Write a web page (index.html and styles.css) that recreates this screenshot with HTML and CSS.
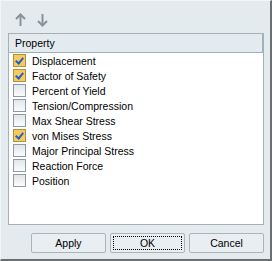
FILE: index.html
```html
<!DOCTYPE html>
<html lang="en">
<head>
    <meta charset="UTF-8">
    <title>Property</title>
    <link rel="stylesheet" href="styles.css">
</head>
<body>
    <div class="dialog">
        <div class="toolbar">
            <svg class="arrow" width="11" height="14" viewBox="0 0 11 14">
                <polyline points="1,6 5.5,1.5 10,6" stroke="#8b9297" stroke-width="2" fill="none"/>
                <line x1="5.5" y1="2" x2="5.5" y2="13" stroke="#8b9297" stroke-width="2"/>
            </svg>
            <svg class="arrow" width="11" height="14" viewBox="0 0 11 14">
                <polyline points="1,8 5.5,12.5 10,8" stroke="#8b9297" stroke-width="2" fill="none"/>
                <line x1="5.5" y1="1" x2="5.5" y2="12" stroke="#8b9297" stroke-width="2"/>
            </svg>
        </div>

        <div class="list">
            <div class="list-header">
                <div class="col">Property</div>
            </div>
            <div class="row"><span class="check checked"></span>Displacement</div>
            <div class="row"><span class="check checked"></span>Factor of Safety</div>
            <div class="row"><span class="check"></span>Percent of Yield</div>
            <div class="row"><span class="check"></span>Tension/Compression</div>
            <div class="row"><span class="check"></span>Max Shear Stress</div>
            <div class="row"><span class="check checked"></span>von Mises Stress</div>
            <div class="row"><span class="check"></span>Major Principal Stress</div>
            <div class="row"><span class="check"></span>Reaction Force</div>
            <div class="row"><span class="check"></span>Position</div>
        </div>

        <div class="buttons">
            <button>Apply</button>
            <button class="focused"><span>OK</span></button>
            <button>Cancel</button>
        </div>
    </div>
</body>
</html>
```

FILE: styles.css
```css
body {
    margin: 0;
    font-family: "Liberation Sans", Arial, sans-serif;
    font-size: 10.5px;
    color: #000;
}
.dialog {
    width: 272px;
    height: 261px;
    box-sizing: border-box;
    background: #e4ebef;
    border-top: 1px solid #f3f6f8;
    border-left: 1px solid #f3f6f8;
    border-right: 2px solid #6c6f71;
    border-bottom: 2px solid #6c6f71;
    padding: 0 6px 6px 7px;
    display: flex;
    flex-direction: column;
}
.toolbar {
    height: 32px;
    display: flex;
    align-items: center;
    gap: 11px;
    padding-left: 7px;
    padding-top: 5px;
    box-sizing: border-box;
}
.arrow {
    display: block;
}
.list {
    height: 192px;
    box-sizing: border-box;
    border: 1px solid #a9b0b5;
    background: #fff;
}
.list-header {
    height: 19px;
    box-sizing: border-box;
    background: #e4ebef;
    border-bottom: 1px solid #9db0be;
    display: flex;
}
.col {
    flex: 1;
    border-right: 1px solid #9db0be;
    padding-left: 6px;
    line-height: 18px;
}
.row {
    height: 15px;
    display: flex;
    align-items: center;
    white-space: nowrap;
}
.check {
    width: 13px;
    height: 13px;
    box-sizing: border-box;
    margin-left: 4px;
    margin-right: 6px;
    border: 1px solid #8f9ba3;
    background: linear-gradient(#e2e6e9, #fafbfb);
    position: relative;
}
.check.checked {
    border-color: #b48f3a;
    background: #f6ca5f;
}
.check.checked::after {
    content: "";
    position: absolute;
    left: 3px;
    top: 1px;
    width: 3px;
    height: 6px;
    border: solid #1d5fcf;
    border-width: 0 2px 2px 0;
    transform: rotate(40deg);
}
.buttons {
    margin-top: 8px;
    display: flex;
    justify-content: flex-end;
    gap: 4px;
}
button {
    width: 75px;
    height: 20px;
    padding: 0;
    border: 1px solid #adb3b7;
    border-radius: 2px;
    background: #e8eef1;
    font-family: "Liberation Sans", Arial, sans-serif;
    font-size: 10.5px;
    color: #000;
}
button.focused {
    padding: 2px;
}
button.focused span {
    display: flex;
    align-items: center;
    justify-content: center;
    height: 100%;
    border: 1px dotted #000;
    box-sizing: border-box;
}
```
